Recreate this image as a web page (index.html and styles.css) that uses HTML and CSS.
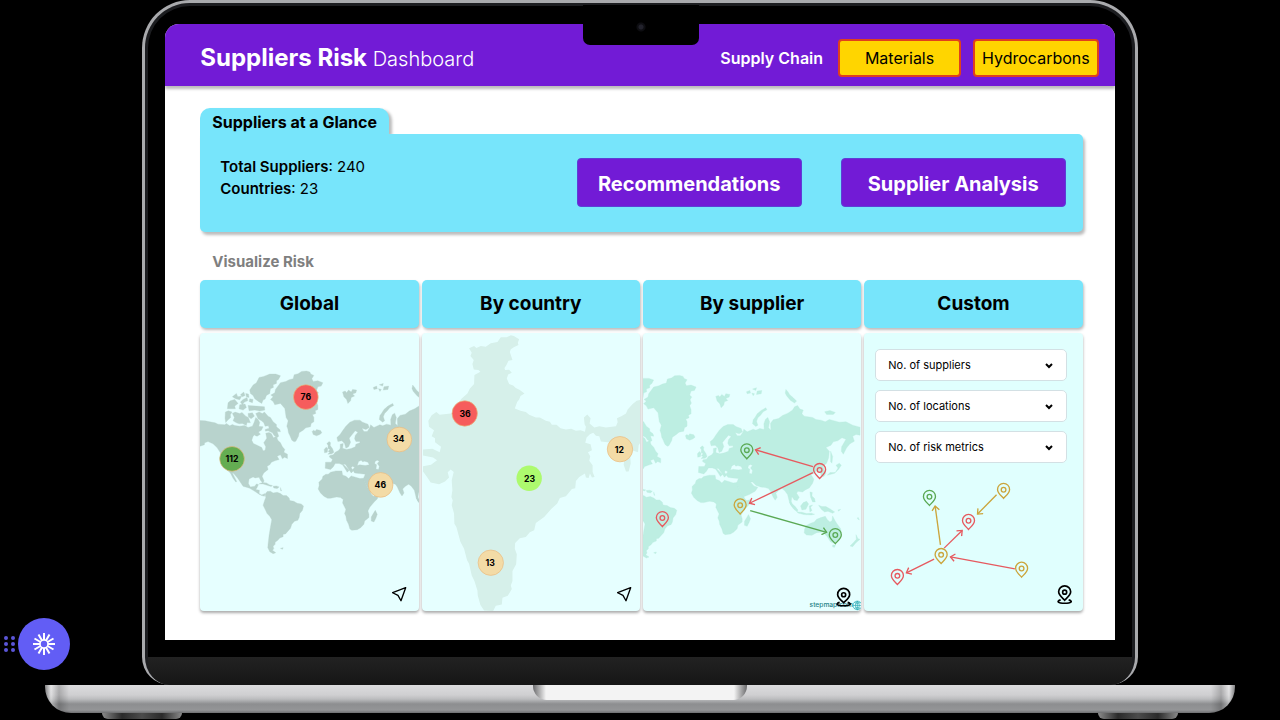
FILE: index.html
```html
<!DOCTYPE html>
<html lang="en">
<head>
<meta charset="utf-8">
<title>Suppliers Risk Dashboard</title>
<link rel="stylesheet" href="styles.css">
</head>
<body>
<svg class="defs" aria-hidden="true">
  <defs>
    <g id="world" fill="currentColor" stroke="currentColor" stroke-width="1" stroke-linejoin="round">
      <path d="M0 268L21 271 36 272 50 275 66 278 75 282 95 284 100 280 110 287 118 283 125 286 140 288 155 286 165 292 178 288 183 277 188 262 195 268 200 277 197 288 210 290 205 300 192 308 180 318 176 330 181 340 192 345 206 352 210 362 216 360 218 350 212 338 221 324 218 309 228 307 235 311 241 323 250 318 254 330 262 338 268 350 275 358 272 366 283 372 283 385 274 381 268 386 262 374 252 378 258 388 245 392 235 396 230 404 222 408 225 418 212 428 207 438 213 452 209 458 202 450 198 441 186 443 180 440 168 446 166 460 172 470 185 468 190 461 196 463 192 472 188 478 199 480 198 490 206 494 216 490 214 498 206 496 198 492 186 484 170 474 150 468 142 456 134 444 122 430 118 428 124 440 131 454 128 455 120 444 112 428 100 418 92 404 84 385 82 368 72 352 60 341 45 334 35 338 34 344 21 348 0 352Z"/>
      <path d="M188 250L198 246 208 250 214 246 225 258 232 262 240 275 250 283 250 290 260 298 262 305 252 304 257 318 252 322 243 316 238 308 225 302 217 303 216 298 228 294 226 287 216 288 212 278 205 272 195 266Z"/>
      <path d="M118 250L126 246 140 250 147 247 158 258 166 262 172 278 162 277 160 286 148 280 138 281 130 278 120 272 124 262ZM97 246L106 242 117 246 112 254 113 262 104 270 98 277 96 264ZM165 250L178 248 184 258 174 266 166 260Z"/>
      <path d="M180 165L190 158 198 142 212 139 230 132 248 132 262 137 256 148 250 152 250 160 240 164 241 172 232 176 230 190 220 196 216 207 210 210 206 220 196 214 185 206 180 196 172 190 170 180ZM105 218L112 212 125 208 135 220 125 228 127 236 103 236ZM118 200L130 190 134 200 146 198 140 209 128 206ZM150 208L162 202 164 212 154 216 148 224 142 216ZM165 226L190 228 214 230 215 240 200 243 185 240 168 242ZM170 206L180 208 178 218 168 214ZM158 190L166 192 168 202 160 200ZM140 224L156 222 160 232 150 240 138 236ZM142 194L152 186 156 196 148 200ZM184 308L194 303 202 312 192 318 186 316Z"/>
      <path d="M232 208L240 200 233 195 245 188 247 178 262 158 278 154 288 149 300 146 303 134 315 131 325 124 340 123 350 126 353 132 362 136 356 146 360 154 374 152 389 158 384 168 374 170 370 182 376 188 371 196 375 206 370 214 374 226 374 238 366 242 368 250 358 254 362 262 362 275 354 280 352 290 338 293 330 300 318 308 316 318 308 333 303 335 296 330 290 316 286 308 284 296 281 288 285 272 279 262 278 255 275 235 262 220 245 224 240 214Z"/>
      <path d="M357 304L361 300 366 303 370 298 382 301 386 308 380 313 370 317 360 313Z"/>
      <path d="M216 492L222 484 232 483 240 488 252 486 262 490 270 496 280 496 288 503 290 511 302 513 312 519 324 521 331 527 328 540 320 550 318 562 314 570 304 573 296 582 292 594 283 604 277 611 270 612 270 619 260 623 254 630 246 636 246 642 240 648 242 655 238 660 248 667 240 670 230 664 224 652 225 640 228 615 232 590 236 568 230 558 222 550 216 537 210 525 214 512 218 502ZM198 461L208 457 220 458 230 464 238 466 234 469 222 465 210 461ZM240 468L250 467 258 470 252 475 242 473ZM262 654L270 652 268 657ZM262 472L265 482 263 482Z"/>
      <path d="M398 432L405 432 412 426 428 422 446 422 448 434 458 438 466 445 474 437 484 440 500 445 511 444 515 456 522 470 528 480 536 494 541 498 556 494 552 506 544 514 530 530 524 542 527 552 527 562 514 572 512 582 502 592 492 598 476 600 470 596 466 582 460 570 458 558 454 550 458 538 452 526 448 518 450 508 442 502 430 500 412 504 403 504 392 498 382 488 375 476 378 466 377 456 387 446 389 438Z"/>
      <path d="M546 540L552 552 548 563 542 575 534 572 534 560 540 550ZM404 372L410 366 405 364 410 358 404 354 405 346 401 340 408 334 412 338 411 346 418 356 422 366 416 371ZM393 358L399 351 404 356 402 366 394 368ZM448 186L456 183 460 188 466 180 474 186 478 178 490 180 488 188 478 192 484 198 474 202 472 212 464 220 460 208 452 200ZM598 220L601 226 590 232 582 242 574 250 570 260 574 272 568 276 558 268 560 256 566 248 572 238 584 228ZM540 172L550 168 552 176 542 178ZM558 164L570 160 568 168ZM572 170L586 168 584 178 570 180ZM556 176L564 178 560 184ZM658 165L664 172 669 180 680 190 690 200 684 206 672 198 660 184 656 176ZM774 232L790 228 806 234 800 240 780 240Z"/>
      <path fill-rule="evenodd" d="M396 414L397 396 414 396 418 388 408 380 410 376 420 374 426 366 436 361 441 354 441 342 450 340 448 354 460 358 474 355 486 350 488 342 500 338 500 334 488 334 484 326 486 316 494 306 486 302 476 314 468 324 472 336 466 350 458 354 454 340 446 332 434 334 431 322 440 314 448 302 458 288 470 276 484 270 500 270 508 276 524 282 528 292 518 298 506 294 512 304 522 304 530 292 532 284 542 292 560 284 568 287 580 282 593 285 592 268 597 254 604 249 609 262 606 280 613 287 612 266 620 256 636 252 648 243 664 236 678 227 684 217 693 213 700 224 710 227 706 238 713 245 738 249 748 255 763 257 776 262 788 255 818 263 838 262 858 272 880 278 880 302 868 300 858 305 863 320 850 328 840 340 830 359 824 350 825 337 838 314 826 310 813 319 800 322 793 332 778 339 788 350 786 370 780 386 770 394 772 404 778 416 772 426 764 424 760 408 748 410 742 416 733 420 742 434 738 446 728 460 716 466 708 472 694 470 690 476 698 488 692 498 683 496 676 486 674 500 680 518 672 510 668 500 663 480 654 468 646 462 636 468 628 476 632 488 626 497 620 488 612 470 606 462 596 459 582 457 568 452 558 442 552 442 562 454 574 458 566 470 548 480 530 487 524 474 514 456 510 446 516 432 498 430 484 428 478 418 484 412 478 408 474 412 480 422 474 428 466 416 456 402 450 402 462 414 468 420 462 426 456 416 448 404 438 400 426 400 420 410 412 418ZM492 406L500 404 516 406 528 404 524 396 514 393 508 395 504 390 496 394ZM546 393L552 390 558 393 552 400 558 408 556 418 548 416 550 404 544 400Z"/>
      <path d="M713 595L714 584 718 573 732 566 743 562 750 554 763 549 776 545 782 555 790 562 796 558 798 544 804 556 810 566 822 582 824 594 816 616 802 626 792 622 782 606 768 592 750 594 736 602 720 601ZM798 631L806 631 804 638 798 637ZM868 600L874 612 880 614 868 624 858 636 850 634 862 622 869 614ZM668 502L676 507 686 516 694 526 692 532 682 524 674 514ZM692 532L706 533 720 537 734 536 744 539 734 541 712 540 694 535ZM702 514L710 504 720 500 726 508 718 524 706 526ZM728 514L738 511 732 518 736 528 730 532ZM756 512L766 516 778 516 792 524 804 532 798 536 784 530 774 532 764 524ZM730 472L737 474 736 484 744 492 746 502 738 502 732 488ZM806 414L814 400 808 392 818 386 824 392 816 404 804 416 790 420 782 422 790 414ZM792 382L792 350 798 366 796 386ZM874 548L878 556 872 552ZM814 526L822 524 816 530Z"/>
    </g>
    <g id="pin" fill="none" stroke-width="4">
      <path d="M0 26C-7 18-18 10-18-1A18 18 0 0 1 18-1C18 10 7 18 0 26Z"/>
      <circle r="7"/>
    </g>
    <g id="place" fill="none" stroke="#000" stroke-width="5">
      <path d="M0 24C-7 17-18 9-18-1A18 18 0 0 1 18-1C18 9 7 17 0 24Z"/>
      <circle r="6"/>
      <path d="M-12 23C-26 27-20 33 0 33C20 33 26 27 12 23"/>
    </g>
    <path id="send" d="M20-19L-19-4-3 4 6 20Z" fill="none" stroke="#000" stroke-width="4" stroke-linejoin="round"/>
    <marker id="head" viewBox="-16 -13 20 26" refX="0" refY="0" markerWidth="20" markerHeight="26" markerUnits="userSpaceOnUse" orient="auto">
      <path d="M-13-11L0 0-13 11" fill="none" stroke="context-stroke" stroke-width="4"/>
    </marker>
  </defs>
</svg>

<div class="laptop">
  <div class="lid">
    <span class="camera"></span>
    <div class="screen">
      <header class="topbar">
        <h1 class="title">Suppliers Risk <span class="title-sub">Dashboard</span></h1>
        <nav class="topnav">
          <span class="topnav-label">Supply Chain</span>
          <button class="chip" type="button">Materials</button>
          <button class="chip" type="button">Hydrocarbons</button>
        </nav>
      </header>
      <main class="content">
        <section class="glance">
          <h2 class="glance-tab">Suppliers at a Glance</h2>
          <div class="glance-panel">
            <p class="stats"><b>Total Suppliers</b>: 240<br><b>Countries</b>: 23</p>
            <div class="actions">
              <button class="action" type="button">Recommendations</button>
              <button class="action" type="button">Supplier Analysis</button>
            </div>
          </div>
        </section>
        <h2 class="section-title">Visualize Risk</h2>
        <div class="views">
          <section class="view">
            <h3 class="view-title">Global</h3>
            <div class="card">
              <svg class="map map-global" viewBox="21 9 654 834" role="img" aria-label="World map with supplier counts">
                <use href="#world"/>
                <g class="bubble"><circle class="red" cx="338" cy="201" r="37"/><text x="338" y="210">76</text></g>
                <g class="bubble"><circle class="green" cx="117" cy="386" r="37"/><text x="117" y="395">112</text></g>
                <g class="bubble"><circle class="sand" cx="618" cy="328" r="37"/><text x="616" y="337">34</text></g>
                <g class="bubble"><circle class="sand" cx="562" cy="464" r="37"/><text x="561" y="473">46</text></g>
                <use href="#send" x="617" y="791"/>
              </svg>
            </div>
          </section>
          <section class="view">
            <h3 class="view-title">By country</h3>
            <div class="card">
              <svg class="map map-country" viewBox="9 9 654 834" role="img" aria-label="Map of India with supplier counts">
                <path fill="currentColor" d="M150 55L165 48 172 54 185 48 200 50 215 40 235 36 245 22 262 22 275 16 284 18 300 28 296 38 298 45 284 52 275 58 272 66 275 75 280 90 268 92 262 105 256 114 258 120 270 119 278 128 267 133 263 145 270 162 282 166 290 174 302 180 316 190 304 198 300 208 294 216 287 235 304 242 320 246 330 254 350 262 362 262 380 272 392 275 398 284 412 284 424 294 440 298 456 296 470 302 484 300 497 305 500 290 496 282 494 262 504 253 514 264 511 280 525 292 540 288 560 292 590 288 595 276 593 264 606 258 620 250 625 238 640 222 652 212 668 208 668 330 658 345 656 366 642 362 633 382 634 400 628 424 620 424 613 404 616 382 608 362 590 352 578 338 545 334 540 318 530 317 522 308 512 312 502 322 498 338 514 342 518 360 506 366 513 378 510 392 520 405 520 425 526 440 518 442 512 430 508 443 500 442 497 430 480 440 470 452 468 474 458 476 440 498 422 503 414 520 396 536 375 560 350 578 345 600 332 606 320 620 302 624 288 638 287 655 293 672 291 702 280 722 280 752 275 765 278 776 266 796 250 802 248 822 230 826 222 842 195 840 184 824 176 795 175 780 166 752 158 735 150 700 144 690 135 655 124 634 112 590 106 580 105 550 98 525 101 510 97 500 100 480 98 450 104 425 95 418 86 426 90 442 78 454 60 462 35 457 24 440 12 424 12 408 36 404 54 390 42 382 12 376 12 358 40 356 62 366 66 350 48 336 48 324 38 318 45 300 30 290 28 272 38 255 52 246 62 254 95 250 112 245 108 230 128 205 145 190 152 176 165 162 166 135 184 125 178 120 164 118 160 102 164 90 154 78 158 68Z"/>
                <g class="bubble"><circle class="red" cx="137" cy="250" r="38"/><text x="138" y="260">36</text></g>
                <g class="bubble"><circle class="lime" cx="330" cy="444" r="38"/><text x="331" y="455">23</text></g>
                <g class="bubble"><circle class="sand" cx="602" cy="357" r="38"/><text x="600" y="367">12</text></g>
                <g class="bubble"><circle class="sand" cx="215" cy="697" r="38"/><text x="213" y="707">13</text></g>
                <use href="#send" x="614" y="791"/>
              </svg>
            </div>
          </section>
          <section class="view">
            <h3 class="view-title">By supplier</h3>
            <div class="card">
              <svg class="map map-supplier" viewBox="12 9 654 834" role="img" aria-label="World map with supplier routes">
                <use href="#world" x="-218" y="13"/>
                <g class="route">
                  <path class="s-red" d="M521 409L349 359"/>
                  <path class="s-red" d="M521 427L331 519"/>
                  <path class="s-green" d="M333 541L562 606"/>
                </g>
                <use class="s-green" href="#pin" x="323" y="360"/>
                <use class="s-red" href="#pin" x="541" y="419"/>
                <use class="s-gold" href="#pin" x="303" y="525"/>
                <use class="s-red" href="#pin" x="70" y="563"/>
                <use class="s-green" href="#pin" x="588" y="614"/>
                <text class="credit" x="511" y="831">stepmap.com</text>
                <g class="globe"><circle cx="654" cy="825" r="13"/><path d="M641 825H667M654 812V838M645 816Q654 822 663 816M645 834Q654 828 663 834M654 812Q642 825 654 838M654 812Q666 825 654 838"/></g>
                <use href="#place" x="613" y="793"/>
              </svg>
            </div>
          </section>
          <section class="view">
            <h3 class="view-title">Custom</h3>
            <div class="card card-custom">
              <form class="filters">
                <label class="filter"><select class="filter-select" aria-label="No. of suppliers"><option>No. of suppliers</option></select><svg class="chevron" viewBox="0 0 8 6"><path d="M1 1L4 4 7 1"/></svg></label>
                <label class="filter"><select class="filter-select" aria-label="No. of locations"><option>No. of locations</option></select><svg class="chevron" viewBox="0 0 8 6"><path d="M1 1L4 4 7 1"/></svg></label>
                <label class="filter"><select class="filter-select" aria-label="No. of risk metrics"><option>No. of risk metrics</option></select><svg class="chevron" viewBox="0 0 8 6"><path d="M1 1L4 4 7 1"/></svg></label>
              </form>
              <svg class="map" viewBox="15 399 654 444" role="img" aria-label="Supplier network">
                <g class="route">
                  <path class="s-gold" d="M244 644L228 528"/>
                  <path class="s-gold" d="M412 494L355 552"/>
                  <path class="s-red" d="M255 654L309 601"/>
                  <path class="s-red" d="M225 687L142 728"/>
                  <path class="s-red" d="M467 716L274 680"/>
                </g>
                <use class="s-green" href="#pin" x="211" y="500"/>
                <use class="s-gold" href="#pin" x="433" y="479"/>
                <use class="s-red" href="#pin" x="328" y="572"/>
                <use class="s-gold" href="#pin" x="246" y="674"/>
                <use class="s-red" href="#pin" x="115" y="737"/>
                <use class="s-gold" href="#pin" x="487" y="715"/>
                <use href="#place" x="616" y="786"/>
              </svg>
            </div>
          </section>
        </div>
      </main>
    </div>
    <div class="chin"></div>
  </div>
  <div class="deck"><div class="deck-lip"></div></div>
  <div class="feet"><span class="foot"></span><span class="foot"></span></div>
</div>

<div class="recorder">
  <svg class="grip" viewBox="0 0 11 16" aria-hidden="true"><g fill="#5b56d8"><circle cx="2" cy="2" r="2"/><circle cx="9" cy="2" r="2"/><circle cx="2" cy="8" r="2"/><circle cx="9" cy="8" r="2"/><circle cx="2" cy="14" r="2"/><circle cx="9" cy="14" r="2"/></g></svg>
  <button class="record" type="button" aria-label="Record">
    <svg class="burst" viewBox="-11 -11 22 22"><circle r="4" fill="none" stroke="#fff" stroke-width="1.6"/><path d="M0-11V-4M0 11V4M-11 0H-4M11 0H4M-5.5-9.5L-2-3.5M5.5 9.5L2 3.5M-9.5-5.5L-3.5-2M9.5 5.5L3.5 2M5.5-9.5L2-3.5M-5.5 9.5L-2 3.5M9.5-5.5L3.5-2M-9.5 5.5L-3.5 2" stroke="#fff" stroke-width="2"/></svg>
  </button>
</div>
</body>
</html>
```
FILE: styles.css
```css
* {
  box-sizing: border-box;
}

body {
  margin: 0;
  background: #000;
  color: #000;
  font-family: Inter, "Liberation Sans", sans-serif;
}

h1, h2, h3, p {
  margin: 0;
}

button {
  font-family: inherit;
  cursor: pointer;
}

.defs {
  position: absolute;
  width: 0;
  height: 0;
}

/* Laptop frame */
.laptop {
  display: flex;
  flex-direction: column;
  align-items: center;
  min-height: 100vh;
}

.lid {
  position: relative;
  width: calc(78% - 3px);
  padding: 21px 20px 0;
  background: #000;
  border: 3px solid #a9aaad;
  border-bottom: 0;
  border-radius: 48px 48px 28px 28px;
  box-shadow: inset 0 0 0 3px #1c1d20;
}

.camera {
  position: absolute;
  z-index: 1;
  top: 2px;
  left: 50%;
  width: 116px;
  height: 40px;
  margin-left: -57px;
  border-radius: 0 0 7px 7px;
  background: radial-gradient(circle at 50% 22px, #22222c 0 2px, #0d0d11 3px 4px, #000 5px);
}

.screen {
  display: flow-root;
  padding-bottom: 29px;
  background: #fff;
  border-radius: 14px 14px 0 0;
}

.chin {
  height: 28px;
  margin: 17px -17px 0;
  background: linear-gradient(#222, #161616);
  border-radius: 0 0 22px 22px;
}

.deck {
  width: 93%;
  height: 28px;
  border-radius: 0 0 26px 26px;
  background:
    linear-gradient(90deg, #0006 0, #fff5 6px, #0003 14px, #0000 24px, #0000 calc(100% - 24px), #0003 calc(100% - 14px), #fff5 calc(100% - 6px), #0006 100%),
    linear-gradient(#dcdcde 0, #cfcfd1 10px, #bcbdbf 14px, #8d8e90 19px, #949597 25px, #6e6f71 28px);
}

.deck-lip {
  width: 214px;
  height: 15px;
  margin: 0 auto;
  border-radius: 0 0 14px 14px;
  background: linear-gradient(90deg, #6b6b6d, #f3f3f3 13px, #f3f3f3 calc(100% - 13px), #6b6b6d);
}

.feet {
  display: flex;
  justify-content: space-between;
  width: 84%;
}

.foot {
  width: 80px;
  height: 6px;
  border-radius: 0 0 14px 14px;
  background: linear-gradient(90deg, #8a8a8a, #2a2a2a 20px, #4c4c4c 50%, #2a2a2a calc(100% - 20px), #8a8a8a);
}

/* Header */
.topbar {
  display: flex;
  align-items: center;
  justify-content: space-between;
  height: 62px;
  padding: 6px 16px 0 35px;
  color: #fff;
  background: #721bd6;
  border-radius: 14px 14px 0 0;
  box-shadow: 0 3px 3px #0004;
}

.title {
  font-size: 24px;
  font-weight: 700;
  line-height: 32px;
}

.title-sub {
  font-size: 20px;
  font-weight: 300;
}

.topnav {
  display: flex;
  align-items: center;
  gap: 12px;
}

.topnav-label {
  margin-right: 3px;
  font-size: 16px;
  font-weight: 600;
}

.chip {
  min-width: 123px;
  height: 38px;
  padding: 0 7px;
  border: 2px solid #e0401c;
  border-radius: 4px;
  background: #ffd500;
  color: #000;
  font-size: 16px;
}

/* Overview panel */
.content {
  padding: 22px 32px 0 35px;
}

.glance-tab {
  width: fit-content;
  padding: 2px 12px 0;
  border-radius: 10px 10px 0 0;
  background: #77e5fb;
  box-shadow: 3px 2px 3px #0004;
  font-size: 16px;
  font-weight: 700;
  line-height: 24px;
}

.glance-panel {
  position: relative;
  display: flex;
  justify-content: space-between;
  align-items: flex-start;
  padding: 22px 17px 25px 20px;
  border-radius: 0 5px 5px 5px;
  background: #77e5fb;
  box-shadow: 2px 3px 3px #0004;
}

.stats {
  font-size: 15px;
  line-height: 22px;
}

.stats b {
  font-weight: 600;
}

.actions {
  display: flex;
  gap: 39px;
  padding-top: 2px;
}

.action {
  width: 225px;
  height: 49px;
  padding-top: 3px;
  border: 1px solid #5d3fd6;
  border-radius: 4px;
  background: #721bd6;
  color: #fff;
  font-size: 20px;
  font-weight: 700;
}

/* Risk views */
.section-title {
  padding: 18px 12px 6px;
  color: #7f7f7f;
  font-size: 15px;
  font-weight: 700;
  line-height: 24px;
}

.views {
  display: grid;
  grid-template-columns: repeat(4, 1fr);
  gap: 3px;
}

.view {
  display: flex;
  flex-direction: column;
  gap: 5px;
}

.view-title {
  border-radius: 5px;
  background: #77e5fb;
  box-shadow: 1px 2px 3px #0004;
  font-size: 19px;
  font-weight: 700;
  line-height: 48px;
  text-align: center;
}

.card {
  overflow: hidden;
  flex: 1;
  border-radius: 4px;
  background: #e6ffff;
  box-shadow: 0 2px 3px #0005;
}

.card-custom {
  padding-top: 16px;
  background: #e0fffe;
}

.map {
  display: block;
  width: 100%;
  height: auto;
}

.map-global {
  color: #b8d3cd;
}

.map-country {
  color: #d6f0ea;
}

.map-supplier {
  color: #bdeee2;
}

.bubble text {
  font-size: 26px;
  font-weight: 700;
  text-anchor: middle;
}

.bubble circle {
  stroke: #e9b97e;
  stroke-width: 2;
}

.bubble .red {
  fill: #f65c5c;
}

.bubble .green {
  fill: #64ad52;
}

.bubble .sand {
  fill: #f3dba6;
}

.bubble .lime {
  fill: #adfa6e;
  stroke: none;
}

.route path {
  stroke-width: 4;
  marker-end: url(#head);
}

.s-red {
  stroke: #e65a5f;
}

.s-green {
  stroke: #5aa954;
}

.s-gold {
  stroke: #cba53c;
}

.credit {
  fill: #1d7f86;
  font-size: 20px;
  font-weight: 500;
}

.globe {
  fill: none;
  stroke: #25a9b2;
  stroke-width: 2;
}

.filters {
  display: grid;
  gap: 9px;
  padding: 0 16px 0 11px;
}

.filter {
  position: relative;
  display: block;
  height: 32px;
}

.filter-select {
  appearance: none;
  width: 100%;
  height: 100%;
  padding: 0 24px 0 12px;
  border: 1px solid #d3e0e4;
  border-radius: 5px;
  background: #fff;
  color: #000;
  font-family: inherit;
  font-size: 11px;
}

.chevron {
  position: absolute;
  top: 14px;
  right: 14px;
  width: 8px;
  height: 6px;
  fill: none;
  stroke: #000;
  stroke-width: 2;
}

/* Floating recorder control */
.recorder {
  position: fixed;
  left: 4px;
  bottom: 50px;
  display: flex;
  align-items: center;
  gap: 3px;
}

.grip {
  width: 11px;
  height: 16px;
}

.record {
  display: grid;
  place-items: center;
  width: 52px;
  height: 52px;
  padding: 0;
  border: 0;
  border-radius: 50%;
  background: #625df5;
}

.burst {
  width: 22px;
  height: 22px;
}
```
